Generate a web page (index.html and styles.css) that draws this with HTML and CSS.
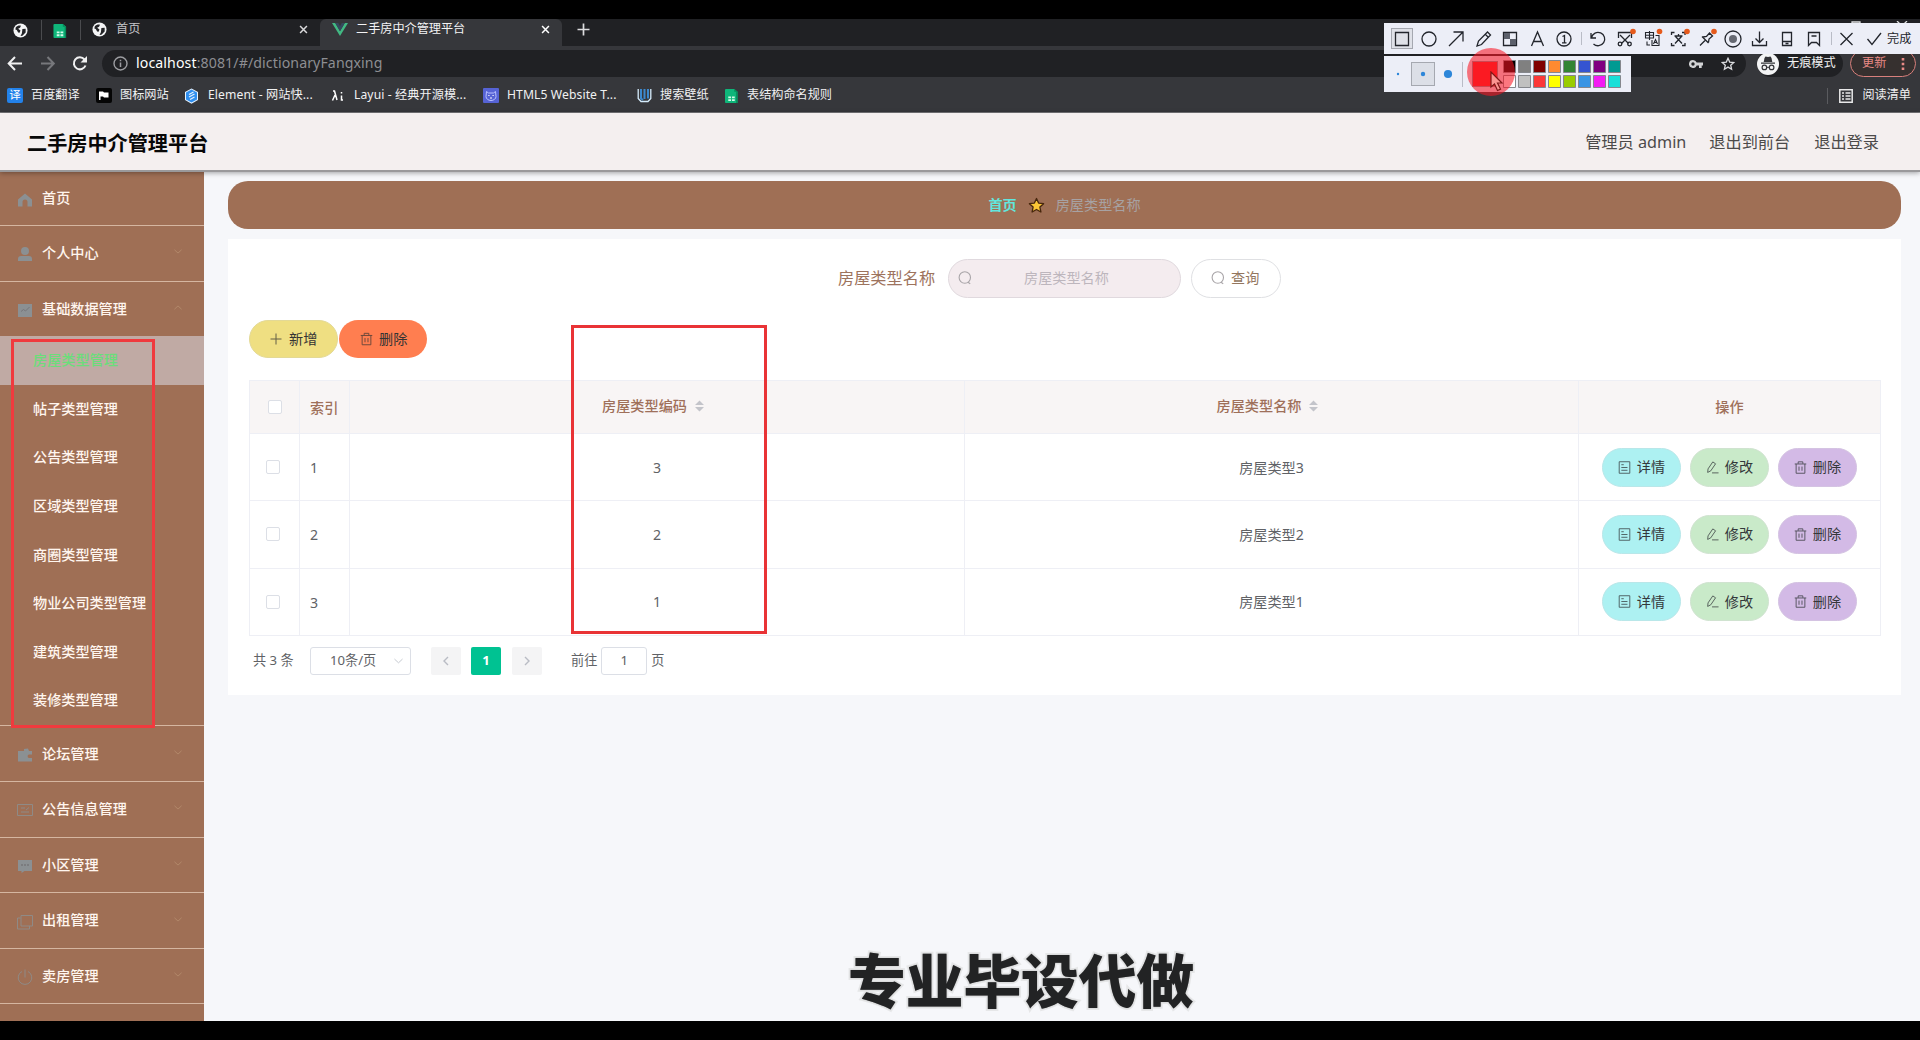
FILE: index.html
```html
<!DOCTYPE html>
<html lang="zh-CN">
<head>
<meta charset="utf-8">
<title>二手房中介管理平台</title>
<link rel="stylesheet" href="styles.css">
</head>
<body>
<svg class="defs" width="0" height="0" aria-hidden="true">
  <symbol id="globe" viewBox="0 0 16 16"><circle cx="8" cy="8" r="7.5" fill="#f4f5f6"/><path d="M3 4.5C4.500 3 6 2.500 8.500 2.800L7.500 5 5.500 6l2.500 2-1 2.500-1.500-.5L4 7.500 2.500 7zM10 6.500l3.500-.5v4l-3.500 3.500-2 .3 1.500-3z" fill="#222326"/></symbol>
  <symbol id="sheet" viewBox="0 0 14 15"><path d="M1 0h9l3.500 3v12H1Q0 15 0 14V1Q0 0 1 0z" fill="#0fb67a"/><path d="M10 0l3.500 3v12H12V3h-2z" fill="#078b5a"/><path d="M3.500 8h3v2h-3zM7.500 8h3v2h-3zM3.500 11h3v2h-3zM7.500 11h3v2h-3z" fill="#d3fbe9"/></symbol>
  <symbol id="close" viewBox="0 0 10 10"><path d="M1.200 1.200l7.600 7.600M8.800 1.200L1.200 8.800" stroke="currentColor" stroke-width="1.700" fill="none"/></symbol>
  <symbol id="down" viewBox="0 0 10 6"><path d="M.5.8L5 5 9.500.8" stroke="currentColor" fill="none"/></symbol>
  <symbol id="search" viewBox="0 0 14 14"><circle cx="6.800" cy="6.500" r="5.700" stroke="currentColor" fill="none" stroke-width="1.100"/><path d="M10 11.300l2.200 1.500" stroke="currentColor" stroke-width="1.100"/></symbol>
  <symbol id="bin" viewBox="0 0 14 14"><path d="M.8 3.200h12.400M4.500 3V.9h5V3M2.300 3.200v10h9.400v-10M5.400 6v4.500M8.600 6v4.500" stroke="currentColor" stroke-width="1" fill="none"/></symbol>
  <symbol id="doc" viewBox="0 0 14 14"><path d="M1.300.8h11.400v12.400H1.300zM3.600 4h2.600M3.600 7h6.600M3.600 10h6.600" stroke="currentColor" stroke-width="1" fill="none"/></symbol>
  <symbol id="edit" viewBox="0 0 14 14"><path d="M2.200 8.500L7.300 1l3 2-5.200 7.600-3.300 1.700zM6.500 12.800h7" stroke="currentColor" stroke-width="1" fill="none"/></symbol>
  <symbol id="sort" viewBox="0 0 10 12"><path d="M0 5L5 0l5 5zM0 7l5 5 5-5z" fill="#c3c4ca"/></symbol>
</svg>

<div class="browser">
  <div class="tabs">
    <div class="pin"><svg width="15" height="15"><use href="#globe"/></svg></div>
    <div class="pin pin-sheet"><svg width="14" height="14"><use href="#sheet"/></svg></div>
    <div class="tab"><svg width="15" height="15"><use href="#globe"/></svg><span>首页</span><svg class="x" width="9" height="9"><use href="#close"/></svg></div>
    <div class="tab tab-active"><svg width="16" height="13" viewBox="0 0 16 13"><path d="M0 0h3.200L8 8.300 12.800 0H16L8 13z" fill="#42b883"/><path d="M3.200 0h3L8 3.200 9.800 0h3L8 8.300z" fill="#35495e"/></svg><span>二手房中介管理平台</span><svg class="x" width="9" height="9"><use href="#close"/></svg></div>
    <svg class="plus" width="13" height="13" viewBox="0 0 13 13"><path d="M6.500.5v12M.5 6.500h12" stroke="#dcdcde" stroke-width="1.700"/></svg>
  </div>
  <div class="navbar">
    <svg class="nav-icons" width="102" height="29" viewBox="0 0 102 29"><g fill="none" stroke="#f1f1f2" stroke-width="2"><path d="M22 14.500H9M15 8l-6.300 6.500L15 21"/><path stroke="#77787c" d="M41 14.500h12M47.500 8l6.300 6.500-6.300 6.500"/><path d="M84.500 10.500A6 6 0 1 0 85.500 16.500"/></g><path d="M87 7v6.500h-6.500z" fill="#f1f1f2"/></svg>
    <div class="address">
      <svg width="15" height="15" viewBox="0 0 15 15"><circle cx="7.500" cy="7.500" r="6.500" fill="none" stroke="#9c9da1" stroke-width="1.400"/><path d="M7.500 6.500V11M7.500 3.700v1.600" stroke="#9c9da1" stroke-width="1.500"/></svg>
      <span class="url"><b>localhost</b>:8081/#/dictionaryFangxing</span>
      <svg class="key" width="14" height="8" viewBox="0 0 14 8"><path fill-rule="evenodd" d="M4 0a4 4 0 0 1 3.700 2.500H14v3h-1.300V8H10V5.500H7.700A4 4 0 1 1 4 0zm0 2.300a1.700 1.700 0 1 0 0 3.400 1.700 1.700 0 0 0 0-3.400z" fill="#d2d3d5"/></svg>
      <svg class="star" width="14" height="14" viewBox="0 0 14 14"><path d="M7 1.300l1.700 3.800 4.100.4-3.100 2.700.9 4L7 10.100l-3.600 2.100.9-4-3.100-2.700 4.100-.4z" fill="none" stroke="#dcdde0" stroke-width="1.300"/></svg>
    </div>
    <div class="incognito"><svg width="22" height="22" viewBox="0 0 22 22"><circle cx="11" cy="11" r="11" fill="#f3f4f5"/><path d="M7.500 5l1-1.500 2.500.6 2.500-.6 1 1.500.8 4H6.700zM4 9.500h14v1.200H4z" fill="#333438"/><path d="M9.800 14.300h2.400" stroke="#333438"/><circle cx="7.400" cy="14.400" r="2.300" fill="none" stroke="#333438" stroke-width="1.200"/><circle cx="14.600" cy="14.400" r="2.300" fill="none" stroke="#333438" stroke-width="1.200"/></svg><span>无痕模式</span></div>
    <div class="update"><span>更新</span><svg width="4" height="14" viewBox="0 0 4 14"><path d="M.7 1h2.600v2.400H.7zM.7 5.800h2.600v2.400H.7zM.7 10.600h2.600V13H.7z" fill="#e98a86"/></svg></div>
  </div>
  <div class="bookmarks">
    <div class="bm bm1"><span class="yi">译</span><span>百度翻译</span></div>
    <div class="bm bm2"><svg width="16" height="15" viewBox="0 0 16 15"><rect width="16" height="15" rx="2" fill="#050505"/><path d="M3 12V3.500h4l1 1h4.500v5H8l-1-1H4.500V12z" fill="#fff"/></svg><span>图标网站</span></div>
    <div class="bm bm3"><svg width="15" height="16" viewBox="0 0 15 16"><path d="M7.500.5L14 4v8l-6.500 3.700L1 12V4z" fill="#e8f4ff"/><path d="M7.500 1.500l5.500 3v7L7.500 14.500 2 11.500v-7z" fill="#2f8ff0"/><path d="M5 6.500l4.500-2.500M5 9l5.500-3M6 11.500l4.500-2.500" stroke="#dff0ff" stroke-width="1.300" fill="none"/></svg><span>Element - 网站快...</span></div>
    <div class="bm bm4"><svg width="13" height="12" viewBox="0 0 13 12"><path d="M2 1h1.500l2.500 9M4 5L1.500 10.500M10.500 2v1.500M10.500 5.500v4.500h1.500" stroke="#fff" stroke-width="1.500" fill="none"/></svg><span>Layui - 经典开源模...</span></div>
    <div class="bm bm5"><svg width="16" height="15" viewBox="0 0 16 15"><rect width="16" height="15" rx="1" fill="#5663d5"/><path d="M3.500 3.500l2 1.500h5l2-1.500.5 5a5 4 0 0 1-10 0z" fill="none" stroke="#b9c1ff"/><path d="M5.300 7.500h1.200M9.500 7.500h1.200M7 10h2" stroke="#fff"/></svg><span>HTML5 Website T...</span></div>
    <div class="bm bm6"><svg width="15" height="15" viewBox="0 0 15 15"><path d="M1.200 1v9.500L4 13.500h7l2.800-3V1" fill="none" stroke="#d5ecfc" stroke-width="1.300"/><path d="M4 1v9.500l2 1.500M7.500 1v10M11 1v9.500" stroke="#3c88cd" stroke-width="2" fill="none"/></svg><span>搜索壁纸</span></div>
    <div class="bm"><svg width="13" height="14"><use href="#sheet"/></svg><span class="rules">表结构命名规则</span></div>
    <div class="reading"><svg width="14" height="14" viewBox="0 0 14 14"><path d="M.8.8h12.400v12.400H.8zM3 4h2M6.500 4h5M3 7h2M6.500 7h5M3 10h2M6.500 10h5" fill="none" stroke="#e9e9ea" stroke-width="1.500"/></svg><span>阅读清单</span></div>
  </div>
</div>

<header class="top">
  <h1>二手房中介管理平台</h1>
  <span class="admin">管理员 admin</span><span class="to-front">退出到前台</span><span class="logout">退出登录</span>
</header>

<div class="body">
  <nav class="side">
    <div class="item"><svg width="16" height="16" viewBox="0 0 16 16"><path d="M8 1.500l7 6v7h-4.500V10a2.500 2.500 0 0 0-5 0v4.500H1v-7z" fill="#8b9093"/></svg><span>首页</span></div>
    <div class="item"><svg width="16" height="16" viewBox="0 0 16 16"><circle cx="8" cy="5" r="4" fill="#8b9093"/><path d="M1 15v-2q0-3 3-3h8q3 0 3 3v2z" fill="#8b9093"/></svg><span>个人中心</span><svg class="arrow" width="8" height="5"><use href="#down"/></svg></div>
    <div class="item open"><svg width="16" height="16" viewBox="0 0 16 16"><path d="M1 2h14v13H1z" fill="#8b9093"/><path d="M4 9.500l2.500-2 2 1.500L12.500 5" stroke="#77767a" fill="none"/></svg><span>基础数据管理</span><svg class="arrow up" width="8" height="5"><use href="#down"/></svg></div>
    <div class="subs">
      <div class="sub active">房屋类型管理</div>
      <div class="sub">帖子类型管理</div>
      <div class="sub">公告类型管理</div>
      <div class="sub">区域类型管理</div>
      <div class="sub">商圈类型管理</div>
      <div class="sub">物业公司类型管理</div>
      <div class="sub">建筑类型管理</div>
      <div class="sub">装修类型管理</div>
    </div>
    <div class="item"><svg width="16" height="16" viewBox="0 0 16 16"><path d="M1 4h6V2l4-.5L12 4h3v3.500h-3a1.800 1.800 0 0 0 0 3.500h3v3.500H1z" fill="#8b9093"/></svg><span>论坛管理</span><svg class="arrow" width="8" height="5"><use href="#down"/></svg></div>
    <div class="item"><svg width="16" height="16" viewBox="0 0 16 16"><path d="M.5 2.500h15v11H.5zM4 6h4M4 10h8M9 8l3-2.500" fill="none" stroke="#8f8a86"/></svg><span>公告信息管理</span><svg class="arrow" width="8" height="5"><use href="#down"/></svg></div>
    <div class="item"><svg width="16" height="16" viewBox="0 0 16 16"><path d="M1 2h14v11H7.500L4.500 15v-2H1z" fill="#8b9093"/><path d="M4 7h2M7 7h2M10 7h2" stroke="#77767a" stroke-width="1.500"/></svg><span>小区管理</span><svg class="arrow" width="8" height="5"><use href="#down"/></svg></div>
    <div class="item"><svg width="16" height="16" viewBox="0 0 16 16"><path d="M4 1.500h11.500V12H4zM3.500 4H.5v11h12v-3" fill="none" stroke="#8f8a86"/></svg><span>出租管理</span><svg class="arrow" width="8" height="5"><use href="#down"/></svg></div>
    <div class="item"><svg width="16" height="16" viewBox="0 0 16 16"><path d="M5 2.500a6.800 6.800 0 1 0 6 0M8 .5v8" fill="none" stroke="#8f8a86"/></svg><span>卖房管理</span><svg class="arrow" width="8" height="5"><use href="#down"/></svg></div>
  </nav>

  <main class="main">
    <div class="crumb"><b>首页</b><svg width="17" height="17" viewBox="0 0 17 17"><path d="M8.500 1.500l2.100 4.600 5 .6-3.700 3.400 1 4.900-4.400-2.500L4.100 15l1-4.900L1.400 6.700l5-.6z" fill="#fcc636" stroke="#46260c" stroke-width="1.300" stroke-linejoin="round"/></svg><span>房屋类型名称</span></div>
    <section class="card">
      <div class="query">
        <label>房屋类型名称</label>
        <div class="field"><svg width="14" height="14"><use href="#search"/></svg><span>房屋类型名称</span></div>
        <div class="ask"><svg width="14" height="14"><use href="#search"/></svg><span>查询</span></div>
      </div>
      <div class="actions">
        <div class="pill add"><svg width="12" height="12" viewBox="0 0 12 12"><path d="M6 .5v11M.5 6h11" stroke="currentColor"/></svg><span>新增</span></div>
        <div class="pill del"><svg width="13" height="14"><use href="#bin"/></svg><span>删除</span></div>
      </div>
      <div class="table">
        <div class="row head"><div class="check"><i></i></div><div class="idx">索引</div><div class="mid"><span>房屋类型编码</span><svg width="9" height="12"><use href="#sort"/></svg></div><div class="mid"><span>房屋类型名称</span><svg width="9" height="12"><use href="#sort"/></svg></div><div class="ops">操作</div></div>
        <div class="row"><div class="check"><i></i></div><div class="idx">1</div><div class="mid">3</div><div class="mid">房屋类型3</div><div class="ops"><div class="btn info"><svg width="13" height="13"><use href="#doc"/></svg>详情</div><div class="btn mod"><svg width="13" height="13"><use href="#edit"/></svg>修改</div><div class="btn rm"><svg width="13" height="13"><use href="#bin"/></svg>删除</div></div></div>
        <div class="row"><div class="check"><i></i></div><div class="idx">2</div><div class="mid">2</div><div class="mid">房屋类型2</div><div class="ops"><div class="btn info"><svg width="13" height="13"><use href="#doc"/></svg>详情</div><div class="btn mod"><svg width="13" height="13"><use href="#edit"/></svg>修改</div><div class="btn rm"><svg width="13" height="13"><use href="#bin"/></svg>删除</div></div></div>
        <div class="row"><div class="check"><i></i></div><div class="idx">3</div><div class="mid">1</div><div class="mid">房屋类型1</div><div class="ops"><div class="btn info"><svg width="13" height="13"><use href="#doc"/></svg>详情</div><div class="btn mod"><svg width="13" height="13"><use href="#edit"/></svg>修改</div><div class="btn rm"><svg width="13" height="13"><use href="#bin"/></svg>删除</div></div></div>
      </div>
      <div class="pager">
        <span class="total">共 3 条</span>
        <div class="size"><span>10条/页</span><svg width="9" height="6"><use href="#down"/></svg></div>
        <div class="pg prev"><svg width="6" height="10" viewBox="0 0 6 10"><path d="M5 1L1 5l4 4" fill="none" stroke="#b9bcc4" stroke-width="1.400"/></svg></div>
        <div class="pg cur">1</div>
        <div class="pg next"><svg width="6" height="10" viewBox="0 0 6 10"><path d="M1 1l4 4-4 4" fill="none" stroke="#b9bcc4" stroke-width="1.400"/></svg></div>
        <span class="go">前往</span><div class="jump">1</div><span>页</span>
      </div>
    </section>
  </main>
</div>

<div class="mark mark-side"></div>
<div class="mark mark-table"></div>
<div class="caption">专业毕设代做</div>

<div class="winbits"><svg width="70" height="4" viewBox="0 0 70 4"><path d="M1 4V1h8v3M46 0l4 4M56 0l-4 4" fill="none" stroke="#dedfe1" stroke-width="1.300"/></svg></div>
<div class="shot shot-tools">
  <svg width="536" height="31" viewBox="0 0 536 31">
    <rect x="7.500" y="5.500" width="21" height="20" fill="#dfe1e8" stroke="#a5a8b0"/>
    <g fill="none" stroke="#22252c" stroke-width="1.300">
      <path d="M11.500 9.500h13v13h-13z"/>
      <circle cx="45" cy="16" r="7"/>
      <path d="M65 23l14-14M69.500 9H79v9.500"/>
      <path d="M93 23l1.500-5L103.500 9l3 3L97.500 21.500zM101 11l3.500 3.500"/>
      <path d="M119.500 9.500h13v13h-13z"/><path d="M120 10h6v6h-6zM126 16h6v6h-6z" fill="#5c606b" stroke="none"/>
      <path d="M147.500 23l6-14 6 14M149.500 18.500h8"/>
      <circle cx="180" cy="16" r="7"/><path d="M178.500 13.500l2-1v7M178 19.800h4.500"/>
      <path d="M207 10v5h5M207.500 14.500a6.700 6.700 0 1 1 2 6.500"/>
      <path d="M234.500 15V9.500h13V15M236 12l8.500 8.500M246 12l-8.500 8.500"/><circle cx="236" cy="21" r="1.800"/><circle cx="245.500" cy="21" r="1.800"/>
      <path stroke-width="1.100" d="M261.500 9.500h8v5.500h-8zM265.500 8V17M262 12.300h7.500M263 18.500v3.500h3M271.500 12.500h3.500v10h-7v-5.500M269.500 21l2-4.500 2 4.500M270.300 19.500h2.500"/>
      <path d="M287.500 12V9.500h3M298 9.500h3V12M287.500 20v2.500h3M298 22.500h3V20M290.500 13h8M294.500 11v2M297.500 13.500l-6.500 7M291.500 13.500l6.500 7"/>
      <path d="M316 22.500l5-5M318 13.500l6.500 6.500M319 14l3.500-.5 3-3.500 3 3-3.500 3-.5 3.500"/>
      <circle cx="349" cy="16" r="8"/><circle cx="349" cy="16" r="4" fill="#666972" stroke="none"/>
      <path d="M375.500 8.500V19M371.500 15.500l4 4 4-4M368.500 18v4.500h14V18"/>
      <path d="M398.500 9.500h9v13h-9zM398.500 18.500h9M401.500 20.500h3"/>
      <path d="M424.500 9.500h11v13l-3-3h-5l-3 3zM427.500 13h5"/>
      <path d="M456.500 10l12 12M468.500 10l-12 12"/>
      <path d="M483.500 16l4.500 5.500L497 10"/>
    </g>
    <path d="M197.500 9v13M447.500 9v13" stroke="#b9bcc6"/>
    <g fill="#e65a1c"><circle cx="249" cy="8.500" r="2.800"/><circle cx="275.500" cy="8.500" r="2.800"/><circle cx="303" cy="8.500" r="2.800"/><circle cx="330" cy="8.500" r="2.800"/></g>
  </svg>
  <span>完成</span>
</div>
<div class="shot shot-colors">
  <svg width="247" height="36" viewBox="0 0 247 36">
    <rect x="27.500" y="6.500" width="23" height="23" fill="#dcdfe7" stroke="#a5a8b0"/>
    <circle cx="14" cy="18" r="1.200" fill="#2d86d9"/><circle cx="39" cy="18" r="2.200" fill="#2d86d9"/><circle cx="64" cy="18" r="4.100" fill="#2d86d9"/>
    <path d="M78.500 6v25" stroke="#b9bcc6"/>
    <rect x="88.500" y="5.500" width="25" height="25" fill="#fd2222" stroke="#8f9096"/>
    <g stroke="#85878d" stroke-width="1">
      <path fill="#000" d="M119.500 4.500h12v12h-12z"/><path fill="#808080" d="M134.500 4.500h12v12h-12z"/><path fill="#800000" d="M149.500 4.500h12v12h-12z"/><path fill="#ff8a30" d="M164.500 4.500h12v12h-12z"/><path fill="#328433" d="M179.500 4.500h12v12h-12z"/><path fill="#3554d1" d="M194.500 4.500h12v12h-12z"/><path fill="#800080" d="M209.500 4.500h12v12h-12z"/><path fill="#009a92" d="M224.500 4.500h12v12h-12z"/>
      <path fill="#fff" d="M119.500 19.500h12v12h-12z"/><path fill="#c0c0c0" d="M134.500 19.500h12v12h-12z"/><path fill="#fb3838" d="M149.500 19.500h12v12h-12z"/><path fill="#ffff00" d="M164.500 19.500h12v12h-12z"/><path fill="#99cc00" d="M179.500 19.500h12v12h-12z"/><path fill="#3894e4" d="M194.500 19.500h12v12h-12z"/><path fill="#f31bf3" d="M209.500 19.500h12v12h-12z"/><path fill="#18dfd8" d="M224.500 19.500h12v12h-12z"/>
    </g>
  </svg>
</div>
<div class="halo"></div>
<svg class="cursor" width="14" height="21" viewBox="0 0 14 21"><path d="M1 1v15l3.500-3 3 6.500 3-1.400-3-6.100H12z" fill="#fb9491" stroke="#7f1717" stroke-width="1.200"/></svg>
</body>
</html>
```
FILE: styles.css
```css
* { box-sizing: border-box; }
body { margin: 0; width: 1920px; height: 1040px; overflow: hidden; background: #000; padding: 19px 0; font-family: "Noto Sans", "Noto Sans CJK SC", sans-serif; font-size: 14.150px; line-height: 1; color: #606266; position: relative; display: flex; flex-direction: column; }
svg { display: block; flex: none; }
span, label { white-space: nowrap; }
.defs { position: absolute; }

.browser { height: 94px; background: #36373b; color: #f1f1f2; font-size: 12.150px; flex: none; border-bottom: 1px solid #77777a; }
.tabs { height: 27px; display: flex; background: #202124; align-items: center; padding-left: 2px; }
.pin { width: 40px; height: 20px; margin-top: -6px; padding: 2px 0 0 11px; border-right: 1px solid #4a4b4e; display: flex; align-items: center; }
.pin-sheet { width: 39px; padding-left: 11px; }
.tab { width: 239px; height: 27px; padding: 0 12px 7px 11px; display: flex; align-items: center; color: #c5c6c9; }
.tab span { margin: 1px 0 0 9px; }
.tab .x { margin-left: auto; color: #d8d8da; }
.tab-active { width: 242px; background: #36373b; border-radius: 6px 6px 0 0; padding: 0 12px 7px 12px; color: #f3f3f4; }
.tab-active span { margin-left: 8px; }
.tab-active .x { color: #fff; }
.plus { margin: -6px 0 0 15px; }

.navbar { height: 33px; display: flex; align-items: center; }
.nav-icons { margin-top: 2px; }
.address { width: 1644px; height: 27px; margin-top: 2px; border-radius: 14px; background: #202124; display: flex; align-items: center; padding-left: 11px; }
.url { margin-left: 8px; width: 250px; font-size: 14.150px; letter-spacing: .1px; color: #8d8e92; }
.url b { font-weight: 400; color: #fff; }
.key { margin-left: 1303px; }
.star { margin-left: 18px; }
.incognito { width: 86px; height: 27px; margin: 2px 0 0 11px; display: flex; align-items: center; background: #202124; border-radius: 14px; }
.incognito span { margin-left: 8px; }
.update { width: 66px; height: 27px; margin: 2px 0 0 7px; border: 1.500px solid #d9807c; border-radius: 14px; color: #e98a86; display: flex; align-items: center; padding: 0 10px 0 11px; justify-content: space-between; background: #36302f; }

.bookmarks { height: 33px; display: flex; align-items: center; padding: 0 9px 0 7px; }
.bm { display: flex; align-items: center; gap: 8px; }
.bm1 { width: 89px; } .bm2 { width: 88px; } .bm3 { width: 147px; } .bm4 { width: 152px; } .bm5 { width: 154px; } .bm6 { width: 88px; }
.bm3 { gap: 9px; } .bm4 { gap: 10px; } .bm3, .bm4, .bm5 { letter-spacing: .1px; }
.rules { margin-left: 1px; }
.yi { width: 16px; height: 15px; border-radius: 2px; background: #2382ea; color: #fff; font-size: 11.500px; line-height: 14px; text-align: center; }
.reading { display: flex; align-items: center; margin-left: auto; border-left: 1px solid #5a5b5f; padding-left: 11px; gap: 9px; height: 16px; }

.top { height: 59px; flex: none; background: #f4efef; border-bottom: 2px solid #9a999b; box-shadow: 0 1px 5px rgba(0,0,0,.35); display: flex; align-items: center; padding: 0 41px 0 27px; z-index: 1; font-size: 16.200px; color: #4c4a4a; }
.top span { padding-top: 1px; }
.top h1 { margin: 4px auto 0 0; font-size: 20.150px; line-height: 1; font-weight: 700; color: #080808; }
.to-front { margin: 0 24px 0 23px; }

.body { flex: 1; min-height: 0; display: flex; background: #f6f7fa; }
.side { width: 204px; flex: none; background: #9f6f55; color: #fff6ef; font-weight: 500; overflow: hidden; }
.item { height: 55.600px; border-bottom: 1.500px solid #d5b6a1; display: flex; align-items: center; padding: 0 22px 0 17px; }
.item:first-child { height: 54px; }
.item.open { height: 54.400px; border: 0; }
.item svg:first-child { margin-top: 2px; }
.item span { margin-left: 9px; }
.arrow { margin: -3px 0 0 auto; color: #b78f70; }
.arrow.up { transform: scaleY(-1); }
.subs { height: 390.500px; border-bottom: 1.500px solid #d5b6a1; }
.sub { height: 48.620px; padding-left: 33px; display: flex; align-items: center; }
.sub.active { background: #c0aaa4; color: #6bdd7a; }

.main { padding: 9px 19px 0 24px; flex: 1; }
.crumb { height: 48px; border-radius: 20px; background: #9f6f55; display: flex; align-items: center; justify-content: center; color: #a7a2a3; }
.crumb b { color: #62e6dd; }
.crumb svg { margin: 0 11px 0 11px; }
.card { margin-top: 10px; height: 456px; background: #fff; padding: 20px 20px 0 21px; }
.query { display: flex; align-items: center; height: 39px; padding-left: 589px; }
.query label { font-size: 16.200px; color: #9d735d; width: 110px; }
.field { width: 233px; height: 39px; border: 1px solid #e0d9de; border-radius: 20px; background: #f4ecef; color: #bdb6bd; display: flex; align-items: center; padding-left: 9px; }
.field span { margin-left: 52px; }
.ask { width: 90px; height: 39px; border: 1px solid #dfe0e3; border-radius: 20px; margin-left: 10px; color: #93765e; display: flex; align-items: center; padding-left: 19px; gap: 6px; }
.ask svg, .field svg { color: #a9a5a8; margin-top: -1px; }
.actions { margin-top: 22px; display: flex; gap: 1px; }
.pill { width: 88px; height: 38px; border-radius: 19px; display: flex; align-items: center; color: #343434; }
.add { background: #efdf82; border: 1px solid #e3d996; width: 89px; padding-left: 20px; gap: 7px; }
.del { background: #ff7e50; padding-left: 21px; gap: 6px; }
.add svg, .del svg { opacity: .75; }

.table { margin-top: 22px; border: 1px solid #eeeff5; border-bottom: 0; width: 1632px; }
.row { height: 67.300px; display: flex; border-bottom: 1px solid #eeeff5; }
.row > div { border-right: 1px solid #eeeff5; display: flex; align-items: center; }
.row > div:last-child { border: 0; }
.head { height: 53px; background: #f8f5f5; color: #9f705a; font-weight: 500; }
.check { width: 50px; padding-left: 16px; }
.head .check { padding-left: 18px; }
.check i { width: 14px; height: 14px; border: 1px solid #dcdfe6; border-radius: 2px; background: #fff; }
.idx { width: 50px; padding: 2px 0 0 10px; }
.mid { width: 614px; justify-content: center; padding-top: 1px; }
.mid:nth-child(3) { width: 615px; }
.head .mid { gap: 8px; padding: 0 8px 2px 0; }
.ops { flex: 1; justify-content: center; gap: 9px; }
.btn { width: 79px; height: 39px; border-radius: 20px; display: flex; align-items: center; justify-content: center; gap: 6px; color: #34383b; border: 1px solid #d9dde0; }
.btn svg { opacity: .8; }
.info { background: #adf1f2; border-color: #b9e7e9; }
.mod { background: #c9eac9; border-color: #d0e3d0; }
.rm { background: #d3bae6; border-color: #d4c3e2; }

.pager { display: flex; align-items: center; height: 28px; margin-top: 11px; padding-left: 4px; font-size: 13.150px; color: #606266; }
.total { width: 57px; }
.size { width: 101px; height: 28px; border: 1px solid #dcdfe6; border-radius: 3px; display: flex; align-items: center; padding: 0 7px 0 19px; justify-content: space-between; }
.size svg { color: #c0c4cc; }
.pg { width: 30px; height: 28px; border-radius: 2px; background: #f4f4f5; display: flex; align-items: center; justify-content: center; }
.prev { margin-left: 20px; }
.cur { margin: 0 11px 0 10px; background: #00c292; color: #fff; font-weight: 700; }
.go { margin: 0 4px 0 29px; }
.jump { width: 46px; height: 28px; border: 1px solid #dcdfe6; border-radius: 3px; margin-right: 4px; display: flex; align-items: center; justify-content: center; }

.mark { position: absolute; border: 3px solid #f03a3e; z-index: 3; }
.mark-side { left: 11px; top: 339px; width: 144px; height: 389px; }
.mark-table { left: 570.500px; top: 325px; width: 196px; height: 309px; border-color: #e93336; }
.caption { position: absolute; left: 848px; top: 952px; font-size: 57.700px; line-height: 58px; font-weight: 900; color: #222324; white-space: nowrap; z-index: 3; -webkit-text-stroke: 4px #e6e7e8; paint-order: stroke fill; text-shadow: 0 0 1px #777; }

.winbits { position: absolute; left: 1851px; top: 21px; z-index: 4; }
.shot { position: absolute; left: 1384px; background: #eceef7; z-index: 5; }
.shot-tools { top: 23px; width: 536px; height: 31px; }
.shot-tools span { position: absolute; left: 503px; top: 9px; font-size: 12.150px; line-height: 14px; color: #24262b; }
.shot-colors { top: 56px; width: 247px; height: 36px; }
.halo { position: absolute; left: 1467px; top: 48px; width: 48px; height: 48px; border-radius: 50%; background: rgba(250,20,35,.58); z-index: 6; }
.cursor { position: absolute; left: 1490px; top: 71px; z-index: 7; }
```
